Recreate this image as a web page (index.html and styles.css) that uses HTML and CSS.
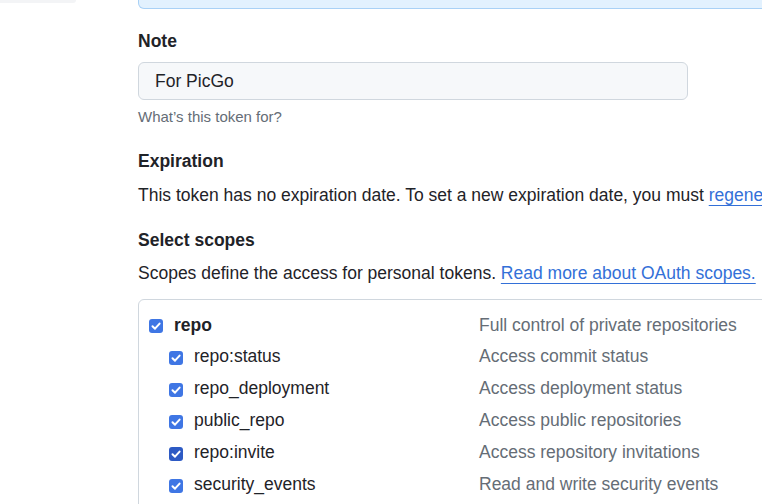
FILE: index.html
```html
<!DOCTYPE html>
<html lang="en">
<head>
<meta charset="utf-8">
<title>New personal access token</title>
<link rel="stylesheet" href="styles.css">
</head>
<body>
<div class="page">
  <aside class="sidebar"><div class="side-card"></div></aside>
  <main class="main">
    <div class="flash"></div>

    <label class="label note-label" for="note">Note</label>
    <input class="input" id="note" type="text" value="For PicGo">
    <p class="hint">What’s this token for?</p>

    <h3 class="label exp-label">Expiration</h3>
    <p class="text exp-text">This token has no expiration date. To set a new expiration date, you must <a href="#" class="link">regenerate the token</a>.</p>

    <h3 class="label scopes-label">Select scopes</h3>
    <p class="text scopes-text">Scopes define the access for personal tokens. <a href="#" class="link">Read more about OAuth scopes.</a></p>

    <div class="scopes">
      <div class="row parent">
        <span class="check"><svg viewBox="0 0 14 14"><path d="M3.5 7.3 6 9.7 10.6 4.6" /></svg></span>
        <span class="name">repo</span>
        <span class="desc">Full control of private repositories</span>
      </div>
      <div class="row child">
        <span class="check"><svg viewBox="0 0 14 14"><path d="M3.5 7.3 6 9.7 10.6 4.6" /></svg></span>
        <span class="name">repo:status</span>
        <span class="desc">Access commit status</span>
      </div>
      <div class="row child">
        <span class="check"><svg viewBox="0 0 14 14"><path d="M3.5 7.3 6 9.7 10.6 4.6" /></svg></span>
        <span class="name">repo_deployment</span>
        <span class="desc">Access deployment status</span>
      </div>
      <div class="row child">
        <span class="check"><svg viewBox="0 0 14 14"><path d="M3.5 7.3 6 9.7 10.6 4.6" /></svg></span>
        <span class="name">public_repo</span>
        <span class="desc">Access public repositories</span>
      </div>
      <div class="row child">
        <span class="check dark"><svg viewBox="0 0 14 14"><path d="M3.5 7.3 6 9.7 10.6 4.6" /></svg></span>
        <span class="name">repo:invite</span>
        <span class="desc">Access repository invitations</span>
      </div>
      <div class="row child">
        <span class="check"><svg viewBox="0 0 14 14"><path d="M3.5 7.3 6 9.7 10.6 4.6" /></svg></span>
        <span class="name">security_events</span>
        <span class="desc">Read and write security events</span>
      </div>
    </div>
  </main>
</div>
</body>
</html>
```

FILE: styles.css
```css
* { box-sizing: border-box; }

html, body {
  margin: 0;
  padding: 0;
  background: #ffffff;
  overflow: hidden;
}

body {
  font-family: "Liberation Sans", Arial, sans-serif;
  font-size: 17.5px;
  line-height: 26px;
  color: #1f2328;
}

.page {
  display: flex;
  gap: 62px;
  width: 1000px;
}

.sidebar {
  width: 76px;
  flex: none;
}

.side-card {
  height: 3px;
  background: #f3f4f6;
  border-bottom-right-radius: 6px;
}

.main {
  width: 860px;
  flex: none;
}

.flash {
  height: 9px;
  background: #e2f1fe;
  border: 1px solid #a9d1f6;
  border-top: none;
  border-bottom-left-radius: 6px;
}

.label {
  display: block;
  margin: 0;
  font-size: 17.5px;
  font-weight: 700;
  line-height: 26px;
}

.note-label {
  margin-top: 19px;
  margin-bottom: 8px;
}

.input {
  display: block;
  width: 550px;
  height: 38px;
  margin: 0;
  padding: 0 16px;
  font-family: inherit;
  font-size: 17.5px;
  color: #1f2328;
  background: #f6f8fa;
  border: 1px solid #d0d7de;
  border-radius: 6px;
  outline: none;
}

.hint {
  margin: 7px 0 0;
  font-size: 15px;
  line-height: 20px;
  color: #656d76;
}

.exp-label {
  margin-top: 21px;
}

.text {
  margin: 8px 0 0;
  white-space: nowrap;
}

.scopes-label {
  margin-top: 19px;
}

.scopes-text {
  margin-top: 7px;
}

.link {
  color: #3370d8;
  text-decoration: underline;
  text-underline-offset: 4px;
  text-decoration-thickness: 1px;
}

.scopes {
  margin-top: 13px;
  width: 760px;
  padding: 9px 10px 20px;
  border: 1px solid #d0d7de;
  border-radius: 6px;
}

.row {
  display: grid;
  align-items: center;
  column-gap: 11px;
  height: 32px;
}

.row.parent {
  height: 31px;
  grid-template-columns: 14px 294px 1fr;
}

.row.child {
  padding-left: 20px;
  grid-template-columns: 14px 274px 1fr;
}

.parent .name {
  font-weight: 700;
}

.desc {
  color: #656d76;
  white-space: nowrap;
}

.check {
  width: 14px;
  height: 14px;
  margin-top: 3px;
  border-radius: 3px;
  background: #3f76e4;
  display: flex;
}

.check.dark {
  background: #2d5ac4;
}

.check svg {
  width: 14px;
  height: 14px;
  fill: none;
  stroke: #ffffff;
  stroke-width: 2;
  stroke-linecap: round;
  stroke-linejoin: round;
}
```
